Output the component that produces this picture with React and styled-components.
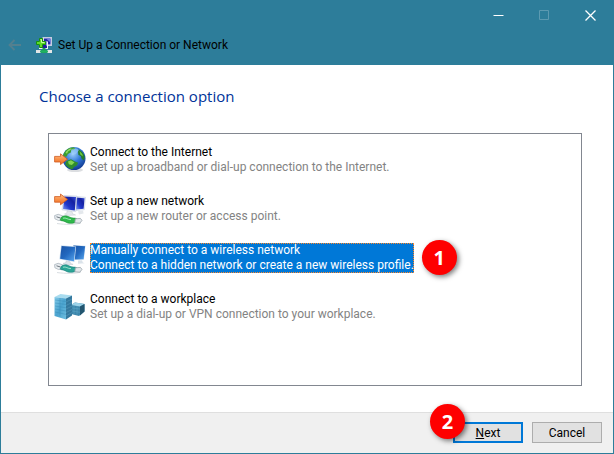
import React, { useState } from "react";
import styled, { createGlobalStyle } from "styled-components";

const GlobalStyle = createGlobalStyle`
  * {
    box-sizing: border-box;
  }

  body {
    margin: 0;
    font-family: Roboto, "Open Sans", sans-serif;
    font-size: 12px;
    color: #000;
  }

  button,
  input {
    font: inherit;
    color: inherit;
  }
`;

// Icons

const NetworkIcon = () => (
  <svg width="16" height="17" viewBox="0 0 16 17">
    <rect x="7" y="0.5" width="8.5" height="8" fill="#dfe6f2" stroke="#c5cce0" />
    <rect x="8" y="1.5" width="6.5" height="6" fill="#2326a8" />
    <path d="M10 1.5h4.5v4z" fill="#6d7be0" />
    <rect x="3" y="4.5" width="9" height="7.5" fill="#eef1fa" />
    <rect x="4" y="5.5" width="7" height="5.5" fill="#1d1f9c" />
    <path d="M8 5.5h3v4z" fill="#8795ea" />
    <path
      d="M3.5 1.5h3v3h3v3h-3v3h-3v-3h-3v-3h3z"
      fill="#5fdc28"
      stroke="#17900e"
    />
    <path d="M4.5 2.5h1v3h3" stroke="#c9fba4" fill="none" />
    <path d="M6.5 11h3v2h1v3h-5v-3h1z" fill="#17a455" />
    <rect x="0" y="13" width="5" height="3" fill="#e3e6e6" />
    <rect x="11" y="13" width="5" height="3" fill="#e3e6e6" />
    <rect x="4" y="13.5" width="8" height="2" fill="#22b262" />
  </svg>
);

const ArrowShape = ({ y }) => (
  <path
    transform={`translate(0 ${y})`}
    d="M0.6 3h5.900V0.400l7 5.400-7 5.400V8.600H0.6z"
    fill="url(#orangeFill)"
    stroke="#cf5a20"
    strokeWidth="0.8"
    strokeLinejoin="round"
  />
);

const CableShape = ({ color, edge }) => (
  <>
    <path d="M3 30.500c8 1.200 19 1.200 24-0.500" stroke="#d9dee2" fill="none" />
    <path
      d="M0.600 22.600l3.600-1.300 5.300 1.900-1 3.800-3.800.6-3.800-1.800z"
      fill="#e9edf0"
      stroke="#aab4bc"
      strokeWidth="0.8"
    />
    <path d="M2.500 23.800l4 1.200" stroke="#6d7780" fill="none" />
    <path
      d="M7.600 24c3-2 6-1 8.500.3s4 .4 6.400 1.200l-1.600 4.200c-4 1-7 .8-9.400-.8s-4-.6-5.400-2z"
      fill={color}
      stroke={edge}
      strokeWidth="0.6"
    />
    <path d="M9 25.200c3-1 4.600 1.600 8 1.400" stroke="#c4f7df" fill="none" strokeWidth="0.7" />
    <path
      d="M21.400 25.800l5-.4 1.600 2-2.200 2.800-5-.4z"
      fill="#e4e8eb"
      stroke="#98a3ab"
      strokeWidth="0.8"
    />
  </>
);

const GlobeIcon = () => (
  <svg width="32" height="32" viewBox="0 0 32 32">
    <ellipse cx="21" cy="26" rx="8" ry="2" fill="#b9bec4" opacity="0.5" />
    <circle cx="20" cy="14.500" r="11.500" fill="url(#globeFill)" />
    <path
      d="M10 9c2-3.600 5.600-5.700 9.200-5.700l2.400 1-2 1.700-2.400.4-.4 2.200-3 1.400-1.200 2.600-2.400.2-1.200-1z"
      fill="#3f9f2c"
    />
    <path d="M11.500 8.500c1.500-2.200 3.500-3.700 6-4.200l-1 1.800-2.500 1.400-1 2.200z" fill="#94dc68" />
    <path
      d="M24.500 5.300c3.300 1.700 5.500 4.200 6.300 7.400l-.8 3.800-2.400-1.800-.8-2.800-2.400-1-.4-3z"
      fill="#237b2a"
    />
    <path d="M25.500 7l2.800 3 .6 2.600-2.600-2z" fill="#71c940" />
    <path
      d="M12.500 17l4.500-1.800 4 2.300 3.200 1.200-1.400 2.900-2.800 1.400-1.800 2.500c-3.200-.8-5.600-3-7-5.700z"
      fill="#2f8d2c"
    />
    <path d="M14 17.500l3-1.200 3.500 2.300-2.700 2.400-3-.8z" fill="#83d452" />
    <path d="M17 5.500c3-1.800 6-1.200 8 .4l-3 4.100-4 1z" fill="#9fd0fa" opacity="0.6" />
    <ArrowShape y={9.4} />
  </svg>
);

const NewNetworkIcon = () => (
  <svg width="32" height="32" viewBox="0 0 32 32">
    <path d="M22 3.500l9.500.8-1.200 12.400-8.300.8z" fill="#edf0f6" stroke="#b9c4d6" strokeWidth="0.5" />
    <path d="M22 4.500l8.600.7-1 10.600-7.600.8z" fill="url(#screenNavy)" />
    <path d="M24 18.200l5-.6.6 2.800-4.600 1z" fill="#e4e8ec" />
    <path d="M10 2.500l13 .6-1.300 15.500-13.700-1.800z" fill="#eef1f7" stroke="#b9c4d6" strokeWidth="0.5" />
    <path d="M10.500 3.400l11.500.6-1.200 13.500-11.800-1.600z" fill="url(#screenNavy)" />
    <path d="M13 18l5 .6.6 2.200 3 1.200-7.600.4-3.500-1.400 2.300-.8z" fill="#e4e8ec" stroke="#c4cad1" strokeWidth="0.5" />
    <CableShape color="#2fb84a" edge="#178a35" />
    <ArrowShape y={0.6} />
  </svg>
);

const WirelessIcon = () => (
  <svg width="32" height="32" viewBox="0 0 32 32">
    <path d="M19 3l12.500.8-1.600 14-10 .2z" fill="#cfe1f2" />
    <path d="M19.500 3.500l11.600.7-1.500 13-9.800.2z" fill="url(#screenBlue)" />
    <path d="M24 18.400l4-.2.8 2.200 2 .8-6.800.6z" fill="#dbe3ea" />
    <path d="M7 3.200l15.100 1.300-1.600 15.500L5.300 17.200z" fill="#cfe1f2" />
    <path d="M7.600 3.900l13.800 1.200-1.500 14.100-13.800-2.500z" fill="url(#screenBlue)" />
    <path d="M12 18.900l4 .8.500 1.700 2.600 1-7.100.2-3-1.200 3-.8z" fill="#dbe2e9" stroke="#bcc5cf" strokeWidth="0.5" />
    <CableShape color="#2ba596" edge="#167a78" />
  </svg>
);

const WorkplaceIcon = () => (
  <svg width="32" height="32" viewBox="0 0 32 32">
    <path d="M17 14l4-2.500 9.500 1.500v7.500L25 25l-8-2z" fill="#3c86ab" />
    <path d="M17 14l4-2.500 9.500 1.500-4.500 2.500z" fill="#9cd2e8" />
    <path d="M26 15.500l4.500-2.500v7.500L26 24.500z" fill="#23556f" />
    <path d="M18 17l8 1M18 20l8 1.300M20 14.500v8.500M23 15v8.500" stroke="#68b0d0" strokeWidth="0.4" />
    <path d="M0.500 6l6-3 11.500 1.500-6 3z" fill="#a9dcef" />
    <path d="M12 7.500l6-3v20l-6 4z" fill="#33789e" />
    <path d="M0.500 6v19L12 28.500v-21z" fill="url(#towerFill)" />
    <path
      d="M1 9l11 1.500M1 12l11 1.500M1 15l11 1.800M1 18l11 2M1 21l11 2.400M6 7v18.500"
      stroke="#2f82ae"
      strokeWidth="0.5"
      opacity="0.7"
    />
    <path d="M12 11l6-3M12 14.500l6-3M12 18l6-3M12 21.500l6-3M12 25l6-3.500" stroke="#67a8c8" strokeWidth="0.4" />
  </svg>
);

// Gradients shared by the option icons
const IconDefs = () => (
  <HiddenSvg aria-hidden="true">
    <defs>
      <linearGradient id="orangeFill" x1="0" y1="0" x2="0" y2="1">
        <stop offset="0" stopColor="#ffc18a" />
        <stop offset="0.5" stopColor="#fa9148" />
        <stop offset="1" stopColor="#ec6a24" />
      </linearGradient>
      <radialGradient id="globeFill" cx="0.45" cy="0.3" r="0.7">
        <stop offset="0" stopColor="#9fd0fa" />
        <stop offset="0.5" stopColor="#3279da" />
        <stop offset="1" stopColor="#123a91" />
      </radialGradient>
      <linearGradient id="screenNavy" x1="0" y1="1" x2="1" y2="0">
        <stop offset="0" stopColor="#7d97f5" />
        <stop offset="0.35" stopColor="#2038cc" />
        <stop offset="0.7" stopColor="#1420a0" />
        <stop offset="1" stopColor="#3c55dd" />
      </linearGradient>
      <linearGradient id="screenBlue" x1="0" y1="0" x2="1" y2="1">
        <stop offset="0" stopColor="#1a52a3" />
        <stop offset="0.5" stopColor="#2269c0" />
        <stop offset="1" stopColor="#58a6ee" />
      </linearGradient>
      <linearGradient id="towerFill" x1="0" y1="0" x2="1" y2="1">
        <stop offset="0" stopColor="#86cce9" />
        <stop offset="0.5" stopColor="#4aa3cf" />
        <stop offset="1" stopColor="#6fbfe0" />
      </linearGradient>
    </defs>
  </HiddenSvg>
);

const options = [
  {
    id: "internet",
    icon: GlobeIcon,
    title: "Connect to the Internet",
    text: "Set up a broadband or dial-up connection to the Internet.",
  },
  {
    id: "network",
    icon: NewNetworkIcon,
    title: "Set up a new network",
    text: "Set up a new router or access point.",
  },
  {
    id: "wireless",
    icon: WirelessIcon,
    title: "Manually connect to a wireless network",
    text: "Connect to a hidden network or create a new wireless profile.",
    step: 1,
  },
  {
    id: "workplace",
    icon: WorkplaceIcon,
    title: "Connect to a workplace",
    text: "Set up a dial-up or VPN connection to your workplace.",
  },
];

const App = () => {
  const [selected, setSelected] = useState("wireless");

  return (
    <Window>
      <GlobalStyle />
      <IconDefs />
      <TitleBar>
        <WindowControls>
          <ControlButton aria-label="Minimize">
            <svg width="11" height="11" viewBox="0 0 11 11">
              <path d="M0.500 5.500h10" stroke="#fff" />
            </svg>
          </ControlButton>
          <ControlButton aria-label="Maximize" disabled>
            <svg width="11" height="11" viewBox="0 0 11 11">
              <path d="M0.500 0.500h9v9h-9z" stroke="#5c9ab1" fill="none" />
            </svg>
          </ControlButton>
          <ControlButton aria-label="Close">
            <svg width="11" height="11" viewBox="0 0 11 11">
              <path d="M0.500 0.500l10 10M10.500 0.500l-10 10" stroke="#fff" strokeWidth="1.300" />
            </svg>
          </ControlButton>
        </WindowControls>
        <TitleRow>
          <BackButton aria-label="Back" disabled>
            <svg width="14" height="12" viewBox="0 0 14 12">
              <path
                d="M6.500 1L1.500 6l5 5M1.500 6H13"
                stroke="#54808f"
                strokeWidth="1.800"
                fill="none"
              />
            </svg>
          </BackButton>
          <NetworkIcon />
          <WindowTitle>Set Up a Connection or Network</WindowTitle>
        </TitleRow>
      </TitleBar>

      <Content>
        <Heading>Choose a connection option</Heading>
        <OptionList>
          {options.map(({ id, icon: Icon, title, text, step }) => (
            <Option key={id}>
              <OptionInput
                type="radio"
                name="connection"
                value={id}
                checked={selected === id}
                onChange={() => setSelected(id)}
              />
              <Icon />
              <OptionText $selected={selected === id}>
                <span>{title}</span>
                <OptionDetail $selected={selected === id}>{text}</OptionDetail>
                {step && <OptionBadge>{step}</OptionBadge>}
              </OptionText>
            </Option>
          ))}
        </OptionList>
      </Content>

      <Footer>
        <ButtonWrap>
          <DialogButton $primary>
            <u>N</u>ext
          </DialogButton>
          <ButtonBadge>2</ButtonBadge>
        </ButtonWrap>
        <DialogButton>Cancel</DialogButton>
      </Footer>
    </Window>
  );
};

export default App;

const HiddenSvg = styled.svg`
  position: absolute;
  width: 0;
  height: 0;
`;

const Window = styled.div`
  display: flex;
  flex-direction: column;
  min-height: 100vh;
  border: 1px solid #2d7d9a;
  border-top: 0;
  background: #fff;
`;

// Title bar

const TitleBar = styled.header`
  display: flex;
  flex-direction: column;
  padding-bottom: 6px;
  background: #2d7d9a;
`;

const WindowControls = styled.div`
  display: flex;
  justify-content: flex-end;
  height: 31px;
`;

const ControlButton = styled.button`
  display: flex;
  align-items: center;
  justify-content: center;
  width: 46px;
  padding: 0;
  border: 0;
  background: none;
`;

const TitleRow = styled.div`
  display: flex;
  align-items: center;
  height: 28px;
  padding-left: 7px;
`;

const BackButton = styled.button`
  display: flex;
  width: 28px;
  padding: 0;
  border: 0;
  background: none;
`;

const WindowTitle = styled.span`
  margin-left: 6px;
  line-height: 16px;
`;

// Content

const Content = styled.main`
  display: flex;
  flex: 1;
  flex-direction: column;
  padding: 20px 31px 26px 38px;
`;

const Heading = styled.h1`
  margin: 0 0 26px;
  font-family: "Open Sans", sans-serif;
  font-size: 15px;
  font-weight: 400;
  line-height: 22px;
  color: #003399;
`;

const OptionList = styled.div`
  display: flex;
  flex: 1;
  flex-direction: column;
  gap: 17px;
  margin-left: 9px;
  padding: 10px 5px;
  border: 1px solid #828790;
`;

const Option = styled.label`
  display: flex;
  align-items: center;
  gap: 4px;
`;

const OptionInput = styled.input`
  position: absolute;
  opacity: 0;
  pointer-events: none;
`;

const OptionText = styled.span`
  position: relative;
  display: flex;
  flex-direction: column;
  outline: 1px dotted ${({ $selected }) => ($selected ? "#ff8728" : "transparent")};
  outline-offset: -1px;
  background: ${({ $selected }) => ($selected ? "#0078d7" : "none")};
  color: ${({ $selected }) => ($selected ? "#fff" : "#000")};
  line-height: 15px;
`;

const OptionDetail = styled.span`
  color: ${({ $selected }) => ($selected ? "#fff" : "#838383")};
`;

// Numbered step markers

const Badge = styled.span`
  position: absolute;
  display: flex;
  align-items: center;
  justify-content: center;
  width: 35px;
  height: 35px;
  border-radius: 50%;
  background: #fe0000;
  box-shadow: 2px 2px 5px rgba(0, 0, 0, 0.5);
  font-family: "Open Sans", sans-serif;
  font-size: 20px;
  font-weight: 700;
  line-height: 20px;
  color: #fff;
`;

const OptionBadge = styled(Badge)`
  top: -3px;
  left: calc(100% + 8px);
`;

const ButtonBadge = styled(Badge)`
  top: -18px;
  left: -23px;
`;

// Footer

const Footer = styled.footer`
  display: flex;
  justify-content: flex-end;
  gap: 9px;
  padding: 9px 11px 10px;
  border-top: 1px solid #dfdfdf;
  background: #f0f0f0;
`;

const ButtonWrap = styled.div`
  position: relative;
`;

const DialogButton = styled.button`
  width: 70px;
  height: 21px;
  padding: 0;
  border: ${({ $primary }) => ($primary ? "2px solid #0078d7" : "1px solid #adadad")};
  background: #e1e1e1;
  line-height: 16px;
`;
